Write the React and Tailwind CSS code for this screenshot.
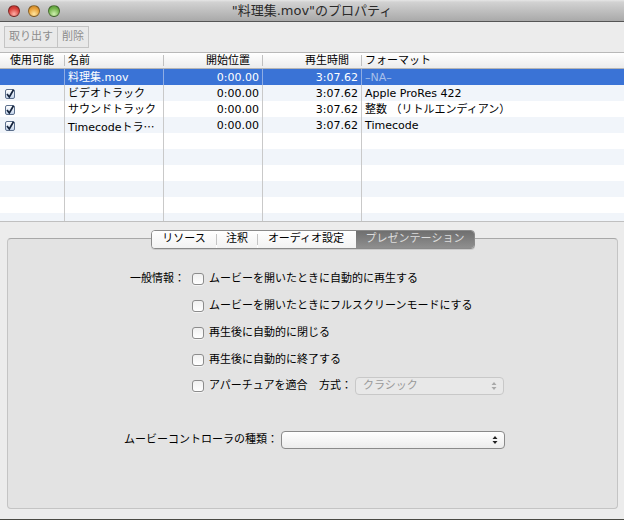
const font = { fontFamily: '"DejaVu Sans", "Noto Sans CJK JP", sans-serif' };

function Light({ cls }) {
  return <span className={`w-[12px] h-[12px] rounded-full border border-black/40 ${cls}`} />;
}

function Check() {
  return (
    <span className="w-[10px] h-[10px] mt-[4px] rounded-[2px] border border-[#5c6f8c] bg-[linear-gradient(#ffffff,#c3d3ea)] flex items-center justify-center">
      <svg width="10" height="10" viewBox="0 0 10 10" className="shrink-0">
        <path d="M2 5 L4.3 8 L8.5 0.8" fill="none" stroke="#14233c" strokeWidth="1.7" />
      </svg>
    </span>
  );
}

const rows = [
  { name: "料理集.mov", fmt: "–NA–", selected: true },
  { name: "ビデオトラック", fmt: "Apple ProRes 422", check: true },
  { name: "サウンドトラック", fmt: "整数 （リトルエンディアン）", check: true },
  { name: <>Timecodeトラ<span style={{ fontFamily: '"Noto Sans CJK JP", sans-serif' }}>…</span></>, fmt: "Timecode", check: true },
  {}, {}, {}, {}, {}, {},
];

function Row({ r, i }) {
  const bg = r.selected ? "bg-[#3a73d6] text-white" : i % 2 === 1 ? "bg-[#f1f5fa] text-black" : "bg-white text-black";
  const line = r.selected ? "border-[#8fade4]" : "border-[#c9c9c9]";
  const cell = `border-r ${line} h-[16px] leading-[18px] overflow-hidden whitespace-nowrap`;
  return (
    <div className={`grid grid-cols-[65px_99px_99px_99px_1fr] h-[16px] shrink-0 ${bg}`}>
      <div className={`${cell} pl-[5px] flex items-start`}>{r.check && <Check />}</div>
      <div className={`${cell} pl-[3px]`}>{r.name}</div>
      <div className={`${cell} text-right pr-[3px]`}>{r.name && "0:00.00"}</div>
      <div className={`${cell} text-right pr-[3px]`}>{r.name && "3:07.62"}</div>
      <div className={`h-[16px] leading-[18px] pl-[3px] whitespace-nowrap ${r.selected ? "text-[#a9c0ea]" : ""}`}>{r.fmt}</div>
    </div>
  );
}

function Box({ cls = "mt-[2px]" }) {
  return (
    <span className={`w-[12px] h-[12px] ${cls} shrink-0 rounded-[3px] border border-[#8c8c8c] bg-[linear-gradient(#f0f0f0,#ffffff)] shadow-[0_1px_0_rgba(255,255,255,0.6)]`} />
  );
}

function Arrows({ color }) {
  return (
    <svg width="6" height="10" viewBox="0 0 6 10">
      <path d="M3 1 L5.5 4 H0.5 Z M3 9 L0.5 6 H5.5 Z" fill={color} />
    </svg>
  );
}

function Option({ label, children }) {
  return (
    <div className="flex items-center h-[27px] shrink-0">
      <div className="w-[184px] shrink-0 pt-[4px] pr-[7px] text-right">{label}</div>
      <Box />
      <span className="ml-[5px] pt-[4px] whitespace-nowrap">{children}</span>
    </div>
  );
}

export default function App() {
  return (
    <div className="w-[624px] h-[520px] overflow-hidden bg-[#ececec] flex flex-col text-[11px] text-black" style={font}>
      <div className="h-[22px] shrink-0 relative flex items-center justify-center border-b border-[#555555] bg-[linear-gradient(#e6e6e6,#d2d2d2_10%,#a9a9a9)] text-[13px] text-[#2a2a2a]">
        <div className="absolute left-[8px] top-[5px] flex gap-[8px]">
          <Light cls="bg-[radial-gradient(circle_at_50%_80%,#ffb0a8,#d8403a_60%,#a82a28)]" />
          <Light cls="bg-[radial-gradient(circle_at_50%_80%,#ffe6a0,#e8a038_60%,#b87820)]" />
          <Light cls="bg-[radial-gradient(circle_at_50%_80%,#d0f0b0,#74b44c_60%,#4c8c30)]" />
        </div>
        "料理集.mov"のプロパティ
      </div>

      <div className="h-[31px] shrink-0 flex items-start pt-[4px] pl-[4px] border-b border-[#b8b8b8]">
        <div className="h-[22px] px-[4px] flex items-center border border-[#c4c4c4] text-[#8c8c8c] bg-[#e9e9e9]">取り出す</div>
        <div className="h-[22px] px-[4px] flex items-center border border-l-0 border-[#c4c4c4] text-[#8c8c8c] bg-[#e9e9e9]">削除</div>
      </div>

      <div className="h-[16px] shrink-0 grid grid-cols-[65px_99px_99px_99px_1fr] items-center leading-[15px] bg-[linear-gradient(#ffffff,#ececec)] border-b border-[#b5b5b5]">
        <div className="border-r border-[#c0c0c0] h-[11px] leading-[11px] text-center">使用可能</div>
        <div className="border-r border-[#c0c0c0] h-[11px] leading-[11px] pl-[3px]">名前</div>
        <div className="border-r border-[#c0c0c0] h-[11px] leading-[11px] text-right pr-[12px]">開始位置</div>
        <div className="border-r border-[#c0c0c0] h-[11px] leading-[11px] text-right pr-[12px]">再生時間</div>
        <div className="h-[11px] leading-[11px] pl-[3px]">フォーマット</div>
      </div>

      <div className="h-[153px] shrink-0 overflow-hidden flex flex-col border-b border-[#c0c0c0]">
        {rows.map((r, i) => <Row key={i} r={r} i={i} />)}
      </div>

      <div className="relative flex-1 pt-[16px] pl-[7px] pr-[6px] pb-[11px]">
        <div className="absolute left-[151px] top-[8px] h-[19px] w-[324px] flex rounded-[4px] border border-[#8a8a8a] bg-white overflow-hidden z-10 shadow-[0_1px_0_rgba(0,0,0,0.1)]">
          <div className="w-[64px] flex items-center justify-center bg-[linear-gradient(#ffffff,#f2f2f2)]">リソース</div>
          <div className="w-[1px] my-[3px] bg-[#c4c4c4]" />
          <div className="w-[40px] flex items-center justify-center bg-[linear-gradient(#ffffff,#f2f2f2)]">注釈</div>
          <div className="w-[1px] my-[3px] bg-[#c4c4c4]" />
          <div className="w-[98px] flex items-center justify-center pr-[2px] bg-[linear-gradient(#ffffff,#f2f2f2)]">オーディオ設定</div>
          <div className="flex-1 flex items-center justify-center bg-[linear-gradient(#6f6f6f,#8f8f8f)] text-[#dcdcdc]">プレゼンテーション</div>
        </div>

        <div className="h-full rounded-[4px] border border-[#c4c4c4] border-t-[#a8a8a8] bg-[#e3e3e3] pt-[25px] flex flex-col">
          <Option label="一般情報：">ムービーを開いたときに自動的に再生する</Option>
          <Option>ムービーを開いたときにフルスクリーンモードにする</Option>
          <Option>再生後に自動的に閉じる</Option>
          <Option>再生後に自動的に終了する</Option>
          <div className="flex items-center h-[27px] shrink-0">
            <div className="w-[184px] shrink-0" />
            <Box cls="mt-0" />
            <span className="ml-[5px] pt-[1px] whitespace-nowrap w-[110px]">アパーチュアを適合</span>
            <span className="w-[36px] pt-[1px] whitespace-nowrap">方式：</span>
            <div className="w-[149px] h-[18px] rounded-[4px] border border-[#c8c8c8] bg-[#e8e8e8] flex items-center justify-between pl-[7px] pr-[6px] text-[#9a9a9a]">
              <span className="pt-[1px]">クラシック</span>
              <Arrows color="#a8a8a8" />
            </div>
          </div>
          <div className="flex items-center mt-[32px] h-[18px] shrink-0">
            <div className="w-[273px] shrink-0 pt-[1px] pr-[3px] text-right whitespace-nowrap">ムービーコントローラの種類：</div>
            <div className="w-[224px] h-[18px] rounded-[4px] border border-[#8a8a8a] bg-[linear-gradient(#ffffff,#ececec)] flex items-center justify-end pr-[6px]">
              <Arrows color="#222222" />
            </div>
          </div>
        </div>
        <div className="absolute left-0 right-0 bottom-0 h-[1px] bg-[#4a4a44]" />
      </div>
    </div>
  );
}
